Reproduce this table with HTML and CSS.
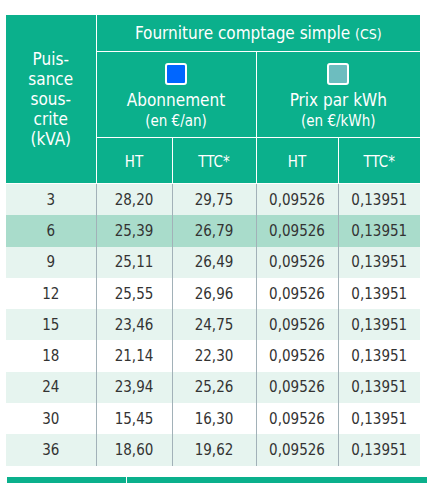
FILE: index.html
```html
<!DOCTYPE html>
<html lang="fr">

<head>
  <meta charset="UTF-8">
  <meta name="viewport" content="width=device-width, initial-scale=1.0">
  <title>Tarifs comptage simple</title>
  <link rel="stylesheet" href="styles.css">
</head>

<body>
  <table class="tarifs">
    <colgroup>
      <col class="c-kva">
      <col class="c-ab-ht">
      <col class="c-ab-ttc">
      <col class="c-kwh-ht">
      <col class="c-kwh-ttc">
    </colgroup>
    <thead>
      <tr class="h-title">
        <th rowspan="3" class="h-kva">Puis-<br>sance<br>sous-<br>crite<br>(kVA)</th>
        <th colspan="4">Fourniture comptage simple <small>(CS)</small></th>
      </tr>
      <tr class="h-group">
        <th colspan="2">
          <span class="swatch swatch-blue"></span>
          <span class="h-label">Abonnement</span>
          <span class="h-unit">(en €/an)</span>
        </th>
        <th colspan="2">
          <span class="swatch swatch-teal"></span>
          <span class="h-label">Prix par kWh</span>
          <span class="h-unit">(en €/kWh)</span>
        </th>
      </tr>
      <tr class="h-tax">
        <th>HT</th>
        <th>TTC*</th>
        <th>HT</th>
        <th>TTC*</th>
      </tr>
    </thead>
    <tbody>
      <tr class="alt"><td>3</td><td>28,20</td><td>29,75</td><td>0,09526</td><td>0,13951</td></tr>
      <tr class="current"><td>6</td><td>25,39</td><td>26,79</td><td>0,09526</td><td>0,13951</td></tr>
      <tr class="alt"><td>9</td><td>25,11</td><td>26,49</td><td>0,09526</td><td>0,13951</td></tr>
      <tr><td>12</td><td>25,55</td><td>26,96</td><td>0,09526</td><td>0,13951</td></tr>
      <tr class="alt"><td>15</td><td>23,46</td><td>24,75</td><td>0,09526</td><td>0,13951</td></tr>
      <tr><td>18</td><td>21,14</td><td>22,30</td><td>0,09526</td><td>0,13951</td></tr>
      <tr class="alt"><td>24</td><td>23,94</td><td>25,26</td><td>0,09526</td><td>0,13951</td></tr>
      <tr><td>30</td><td>15,45</td><td>16,30</td><td>0,09526</td><td>0,13951</td></tr>
      <tr class="alt"><td>36</td><td>18,60</td><td>19,62</td><td>0,09526</td><td>0,13951</td></tr>
    </tbody>
  </table>

  <!-- next table starts just below -->
  <div class="next-table">
    <div class="next-first"></div>
    <div class="next-rest"></div>
  </div>
</body>

</html>
```

FILE: styles.css
```css
body {
  margin: 0;
  padding: 15px 0 0 6px;
  font-family: "DejaVu Sans Condensed", "DejaVu Sans", sans-serif;
  color: #333;
  background-color: #fff;
}

.tarifs {
  width: 414px;
  border-collapse: collapse;
  table-layout: fixed;
}

.c-kva { width: 90px; }
.c-ab-ht { width: 76px; }
.c-ab-ttc { width: 84px; }
.c-kwh-ht { width: 82px; }
.c-kwh-ttc { width: 82px; }

.tarifs th {
  background-color: #0bb08c;
  color: #fff;
  font-weight: normal;
  border: 1px solid #fff;
  padding: 0;
  text-align: center;
}

.tarifs thead tr:first-child th {
  border-top: none;
}

.tarifs th:first-child {
  border-left: none;
}

.tarifs tr th:last-child {
  border-right: none;
}

.h-kva {
  font-size: 16px;
  line-height: 20px;
}

.h-title th {
  height: 36px;
  font-size: 17px;
}

.h-title small {
  font-size: 14px;
}

.h-group th {
  height: 85px;
  vertical-align: top;
}

.swatch {
  display: block;
  width: 18px;
  height: 18px;
  margin: 11px auto 0;
  border: 2px solid #fff;
  border-radius: 3px;
}

.swatch-blue { background-color: #0066ff; }
.swatch-teal { background-color: #6dbdbf; }

.h-label {
  display: block;
  margin-top: 4px;
  font-size: 17px;
  line-height: 22px;
}

.h-unit {
  display: block;
  font-size: 15px;
  line-height: 20px;
}

.h-tax th {
  height: 43px;
  font-size: 15px;
  padding-top: 2px;
}

.tarifs td {
  height: 31.3px;
  padding: 0;
  text-align: center;
  font-size: 15px;
  border-left: 1px solid #a2b1b8;
}

.tarifs td:first-child {
  border-left: none;
}

.tarifs tbody tr.alt {
  background-color: #e6f4ef;
}

.tarifs tbody tr.current {
  background-color: #a9dccb;
}

.next-table {
  display: flex;
  margin-top: 11px;
  margin-left: 1px;
  height: 10px;
  gap: 1px;
}

.next-first {
  width: 119px;
  background-color: #0bb08c;
}

.next-rest {
  flex: 1;
  background-color: #0bb08c;
}
```
